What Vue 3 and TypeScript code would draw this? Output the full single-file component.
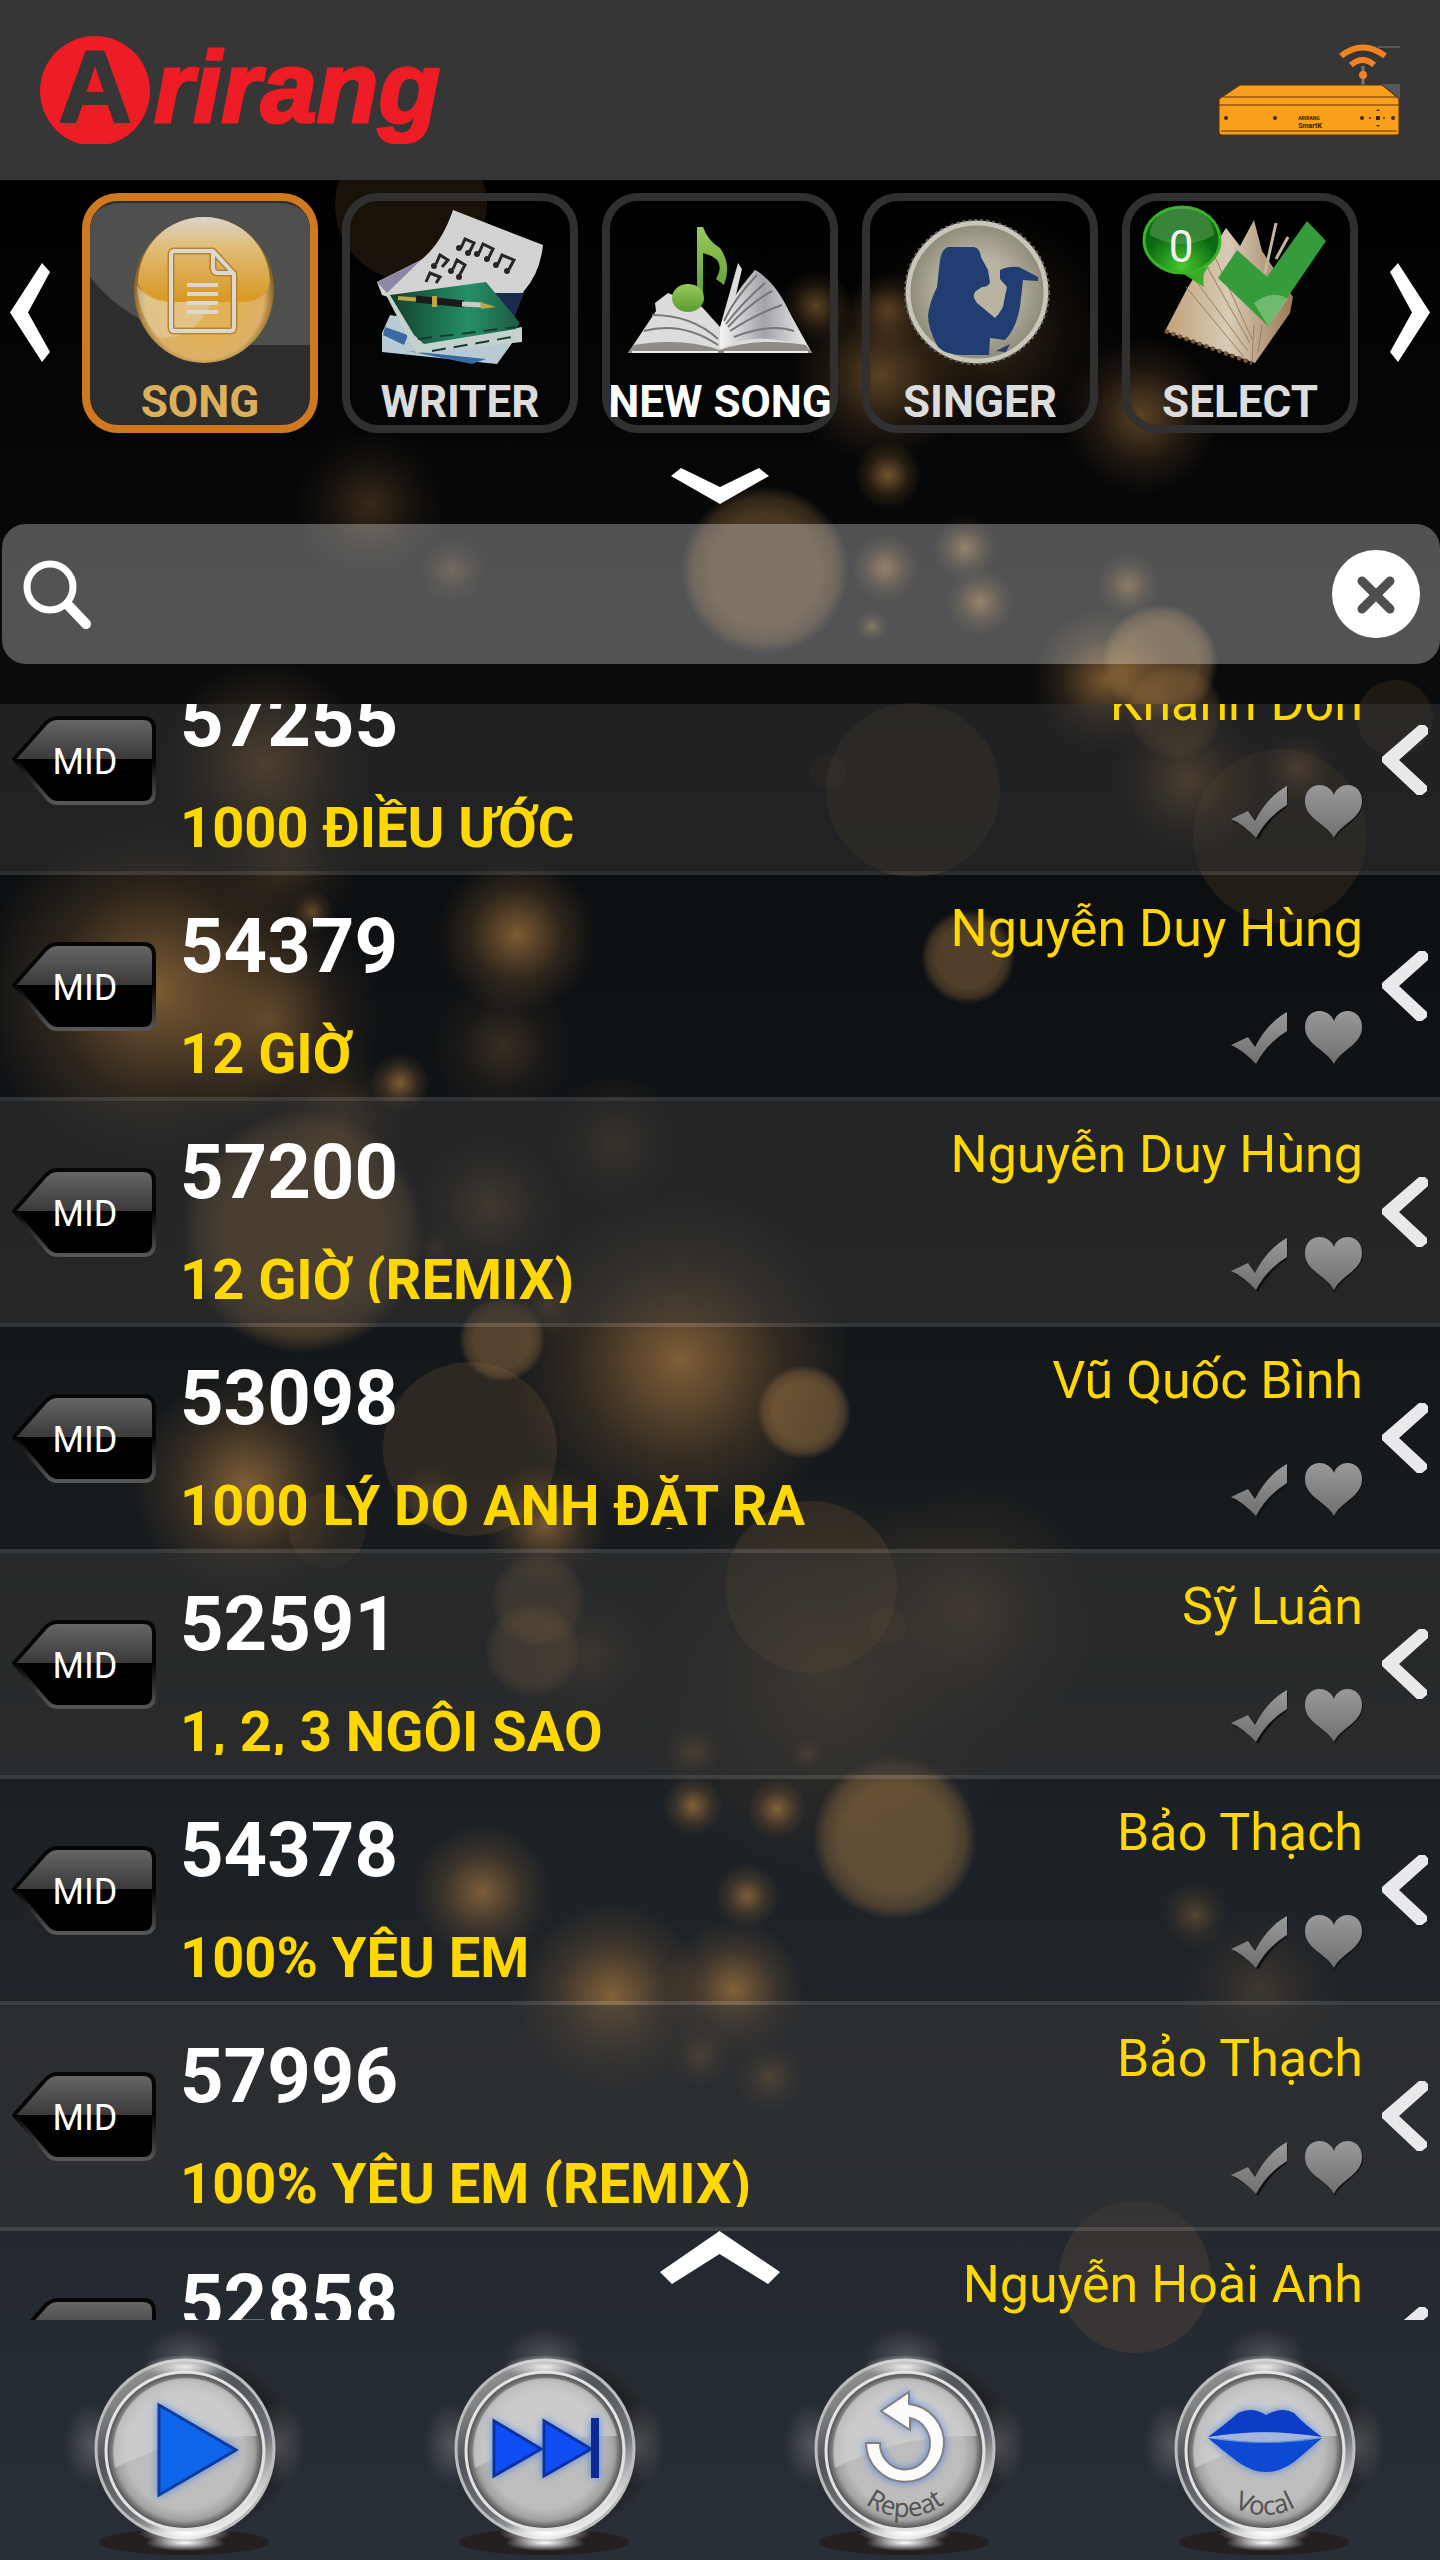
<script setup lang="ts">
import { ref } from 'vue'

interface Song {
  code: string
  title: string
  artist: string
}

interface Light {
  x: number
  y: number
  r: number
  o: number
}

const keyword = ref('')
const activeTab = ref('SONG')
const tabs: string[] = ['SONG', 'WRITER', 'NEW SONG', 'SINGER', 'SELECT']
const controls: string[] = ['Play', 'Next', 'Repeat', 'Vocal']

const songs: Song[] = [
  { code: '57255', title: '1000 ĐIỀU ƯỚC', artist: 'Khánh Đơn' },
  { code: '54379', title: '12 GIỜ', artist: 'Nguyễn Duy Hùng' },
  { code: '57200', title: '12 GIỜ (REMIX)', artist: 'Nguyễn Duy Hùng' },
  { code: '53098', title: '1000 LÝ DO ANH ĐẶT RA', artist: 'Vũ Quốc Bình' },
  { code: '52591', title: '1, 2, 3 NGÔI SAO', artist: 'Sỹ Luân' },
  { code: '54378', title: '100% YÊU EM', artist: 'Bảo Thạch' },
  { code: '57996', title: '100% YÊU EM (REMIX)', artist: 'Bảo Thạch' },
  { code: '52858', title: '', artist: 'Nguyễn Hoài Anh' },
]

const light = (x: number, y: number, r: number, o: number): Light => ({ x, y, r, o })

// Crisp, faint discs of the backdrop
const discs: Light[] = [
  light(411, 205, 76, 0.11), light(1395, 718, 38, 0.1), light(1280, 836, 87, 0.1),
  light(913, 790, 87, 0.1), light(828, 772, 18, 0.06), light(470, 1449, 87, 0.12),
  light(811, 1587, 86, 0.11), light(888, 1626, 18, 0.07), light(327, 1531, 38, 0.08),
  light(1135, 2277, 76, 0.1),
]

// Brighter discs with a soft rim
const pearls: Light[] = [
  light(765, 570, 84, 0.36), light(968, 957, 47, 0.38), light(303, 1231, 122, 0.42),
  light(502, 1339, 43, 0.38), light(804, 1412, 47, 0.42), light(895, 1838, 82, 0.42),
  light(1160, 662, 58, 0.4), light(538, 1600, 48, 0.26), light(533, 1650, 48, 0.28),
  light(1175, 712, 48, 0.24),
]

// Glows fading out from their centre
const glows: Light[] = [
  light(816, 306, 36, 0.7), light(888, 310, 40, 0.6), light(880, 375, 90, 0.7),
  light(1142, 415, 80, 0.7), light(990, 330, 120, 0.4), light(888, 475, 34, 0.9),
  light(370, 505, 76, 0.4), light(452, 570, 34, 0.4), light(885, 568, 34, 0.8),
  light(965, 548, 32, 0.8), light(980, 602, 34, 0.8), light(1128, 585, 32, 0.7),
  light(872, 626, 16, 0.6), light(1105, 680, 72, 0.9), light(1187, 780, 75, 0.7),
  light(1298, 768, 36, 0.6), light(265, 765, 105, 0.75), light(285, 860, 75, 0.4),
  light(155, 990, 175, 0.95), light(270, 1020, 110, 0.6), light(312, 912, 22, 0.7),
  light(517, 935, 78, 0.95), light(503, 1046, 70, 0.35), light(400, 1083, 30, 0.95),
  light(340, 1120, 70, 0.45), light(615, 1143, 68, 0.35), light(490, 1206, 74, 0.5),
  light(435, 1250, 26, 0.3), light(680, 1360, 170, 0.95), light(548, 1305, 34, 0.4),
  light(245, 1485, 112, 0.95), light(545, 1525, 62, 0.85), light(430, 1500, 34, 0.4),
  light(830, 1680, 200, 0.38), light(970, 1610, 130, 0.4), light(590, 1655, 68, 0.35),
  light(693, 1752, 28, 0.6), light(693, 1806, 30, 0.95), light(777, 1809, 30, 0.95),
  light(807, 1754, 16, 0.5), light(747, 1896, 32, 0.9), light(482, 1892, 68, 0.9),
  light(612, 1997, 94, 0.95), light(734, 1990, 70, 0.95), light(700, 2055, 32, 0.6),
  light(770, 2077, 34, 0.7), light(1195, 1915, 34, 0.5), light(1260, 1990, 80, 0.3),
]
</script>

<template>
  <div class="app">
    <svg class="backdrop" viewBox="0 0 1440 2560" preserveAspectRatio="xMidYMin slice" aria-hidden="true">
      <defs>
        <radialGradient id="glow">
          <stop offset="0" stop-color="#b08040" stop-opacity="0.72" />
          <stop offset="0.25" stop-color="#a57540" stop-opacity="0.54" />
          <stop offset="0.6" stop-color="#a07038" stop-opacity="0.22" />
          <stop offset="1" stop-color="#a07038" stop-opacity="0" />
        </radialGradient>
        <radialGradient id="pearl">
          <stop offset="0.66" stop-color="#bd8a4c" />
          <stop offset="0.86" stop-color="#bd8a4c" stop-opacity="0.65" />
          <stop offset="1" stop-color="#bd8a4c" stop-opacity="0" />
        </radialGradient>
      </defs>
      <circle v-for="(d, i) in glows" :key="`g${i}`" :cx="d.x" :cy="d.y" :r="d.r" :opacity="d.o" fill="url(#glow)" />
      <circle v-for="(d, i) in pearls" :key="`p${i}`" :cx="d.x" :cy="d.y" :r="d.r" :opacity="d.o" fill="url(#pearl)" />
      <circle v-for="(d, i) in discs" :key="`d${i}`" :cx="d.x" :cy="d.y" :r="d.r" :opacity="d.o" fill="#e0a050" />
    </svg>

    <header class="header">
      <svg class="logo" viewBox="0 0 400 108" role="img" aria-label="Arirang">
        <ellipse cx="55" cy="55" rx="55" ry="55" fill="#ee1c25" />
        <text class="logo-a" x="55" y="86" text-anchor="middle">A</text>
        <text class="logo-word" x="114" y="86">rirang</text>
      </svg>
      <button class="plain" aria-label="Device">
        <svg class="device" viewBox="0 0 182 92">
          <path d="M160 2h22v2h-22zM164 40h18v15z" fill="#585858" />
          <path d="M145 22v20" stroke="#777" stroke-width="3" />
          <circle cx="145" cy="31" r="4" fill="#f58220" />
          <path d="M123 12q22-17 44 0M133 21q12-10 23 0" fill="none" stroke="#f58220" stroke-width="6" />
          <path d="M1 55 22 41H164L181 55V89Q181 91 178 91H4Q1 91 1 88Z" fill="#f99f1c" stroke="#51330d" />
          <path d="M5 53H178M1 61H181M3 87H179" stroke="#59380c" fill="none" />
          <g fill="#3c2a12">
            <circle cx="8" cy="74" r="2" /><circle cx="57" cy="74" r="2" />
            <circle cx="144" cy="74" r="2" /><circle cx="152" cy="74" r="1" />
            <rect x="158" y="72" width="4" height="4" /><circle cx="166" cy="74" r="1" />
            <circle cx="175" cy="74" r="2" />
            <path d="m158 67 2-2 2 2zM158 81l2 2 2-2z" />
          </g>
          <text x="91" y="76" text-anchor="middle" font-size="5" font-weight="700" fill="#2c1d08">ARIRANG</text>
          <text x="92" y="84" text-anchor="middle" font-size="7" font-weight="700" fill="#2c1d08">SmartK</text>
        </svg>
      </button>
    </header>

    <nav class="nav">
      <button class="plain" aria-label="Previous">
        <svg class="side" viewBox="0 0 40 100"><path d="M32 0 40 9 18 49.500 40 89 32 99 0 49.500Z" fill="#fff" /></svg>
      </button>
      <div class="tabs">
        <button
          v-for="tab in tabs"
          :key="tab"
          class="tab"
          :class="{ active: tab === activeTab, bright: tab === 'NEW SONG' }"
          @click="activeTab = tab"
        >
          <svg class="picture" viewBox="0 0 236 240" aria-hidden="true">
            <template v-if="tab === 'SONG'">
              <defs>
                <linearGradient id="coin" x2="0" y2="1">
                  <stop stop-color="#d9d4cc" /><stop offset="0.35" stop-color="#e0bd77" />
                  <stop offset="0.95" stop-color="#d99a26" />
                </linearGradient>
                <radialGradient id="coinbase" cy="0.55">
                  <stop offset="0.5" stop-color="#e2b257" /><stop offset="0.85" stop-color="#dcb066" />
                  <stop offset="1" stop-color="#8a6528" />
                </radialGradient>
              </defs>
              <path d="M8 40Q8 10 40 10H196Q228 10 228 40V152H170Q60 150 8 84Z" fill="#4f4f4e" />
              <ellipse cx="122" cy="97" rx="70" ry="73" fill="url(#coinbase)" />
              <path d="M56 90A66 66 0 0 1 188 90Q184 109 158 109H90Q64 107 56 90" fill="url(#coin)" />
              <path d="M55 92Q64 109 92 109H130Q110 150 76 144 56 122 55 92" fill="#e3d3b4" opacity="0.5" />
              <g fill="none" stroke="#b5832f" stroke-width="7" stroke-linejoin="round">
                <path d="M92 58H131L152 81V134Q152 138 148 138H92Q89 138 89 134V62Q89 58 92 58ZM131 58V76Q132 80 136 80H152" />
              </g>
              <g fill="none" stroke="#ddd8cf" stroke-width="4" stroke-linejoin="round">
                <path d="M92 58H131L152 81V134Q152 138 148 138H92Q89 138 89 134V62Q89 58 92 58ZM131 58V76Q132 80 136 80H152" />
                <path d="M105 92H136M105 101H136M105 110H136M105 119H136" />
              </g>
            </template>
            <template v-else-if="tab === 'WRITER'">
              <defs>
                <linearGradient id="folder"><stop stop-color="#123e2c" /><stop offset="0.6" stop-color="#259068" /><stop offset="1" stop-color="#1d5a43" /></linearGradient>
              </defs>
              <path d="M35 89 79 67Q100 50 111 17L201 52Q198 80 182 98L160 140 40 102Z" fill="#d4d3d3" />
              <path d="m35 89 44-22-34 33Z" fill="#8d86a5" />
              <g fill="none" stroke="#252525" stroke-width="3">
                <path d="M119 55l4-9 9 4-5 10M137 60l4-9 10 5-5 10M156 71l4-9 12 5-6 11M94 71l4-9 8 5-6 7M111 76l4-9 8 5-6 11M84 89l4-9 10 4-4 6" />
              </g>
              <g fill="#252525">
                <circle cx="117" cy="55" r="3" /><circle cx="126" cy="60" r="3" /><circle cx="135" cy="61" r="3" />
                <circle cx="145" cy="66" r="3" /><circle cx="154" cy="72" r="3" /><circle cx="165" cy="78" r="3" />
                <circle cx="92" cy="73" r="3" /><circle cx="109" cy="78" r="3" /><circle cx="117" cy="84" r="3" />
              </g>
              <path d="M150 100H182L170 130Z" fill="#1a2c4d" />
              <path d="M48 122 40 140V159L155 171 176 142Z" fill="#b8cbd4" />
              <path d="M43 134 66 142 62 152 41 142ZM66 158 144 166 130 171Z" fill="#3a6aa4" />
              <path d="M44 102 50 99 82 151 180 134V149L74 160Z" fill="#c5d1ce" />
              <path d="M48 102 144 89 178 130 174 136 82 151 72 142Z" fill="url(#folder)" />
              <path d="M76 146 174 134M90 158 170 144" stroke="#173b30" stroke-width="2" stroke-dasharray="14 8" />
              <path d="M56 105 92 108" stroke="#c3a445" stroke-width="4" />
              <path d="M74 106 122 111" stroke="#1b1b1b" stroke-width="7" />
              <path d="M120 111 140 112" stroke="#cacaca" stroke-width="5" />
              <path d="m138 109 16 5-15 2ZM90 103h5v11h-5z" fill="#c3a445" />
            </template>
            <template v-else-if="tab === 'NEW SONG'">
              <defs>
                <linearGradient id="pages"><stop stop-color="#f5f4f2" /><stop offset="0.5" stop-color="#a3a3a8" /><stop offset="1" stop-color="#ededed" /></linearGradient>
                <linearGradient id="note" x2="0" y2="1"><stop stop-color="#9ac95b" /><stop offset="1" stop-color="#5b9c31" /></linearGradient>
              </defs>
              <path d="M53 110 66 100 100 114 118 134 136 70 140 76 132 110 153 77Q172 88 190 124L210 160H26L54 118Z" fill="#dcdcdc" />
              <path d="M118 136Q124 110 153 77 176 90 190 126L206 154Q150 136 118 156Z" fill="url(#pages)" />
              <g fill="none" stroke="#77777d" stroke-width="2">
                <path d="M122 128Q132 106 155 82M124 131Q140 110 163 90M126 134Q148 110 170 98M128 138Q156 120 180 112" />
                <path d="M50 122Q90 122 116 146M42 138Q80 128 116 152M132 144Q168 130 192 138" />
              </g>
              <path d="M26 160 32 152Q80 144 118 157 154 144 204 152L210 160Z" fill="#8f8b86" />
              <path d="M30 159H116M122 159H206" stroke="#f0efed" stroke-width="2" />
              <path d="M95 34H101Q106 48 118 55 130 72 122 92L114 86Q124 68 107 62L101 60V108H95Z" fill="url(#note)" />
              <ellipse cx="86" cy="105" rx="16" ry="14" fill="url(#note)" />
            </template>
            <template v-else-if="tab === 'SINGER'">
              <defs>
                <radialGradient id="plate"><stop offset="0.5" stop-color="#b9b4a2" /><stop offset="1" stop-color="#8d8977" /></radialGradient>
              </defs>
              <circle cx="115" cy="99" r="70" fill="url(#plate)" />
              <circle cx="115" cy="99" r="69" fill="none" stroke="#c9c6ba" stroke-width="5" />
              <circle cx="115" cy="99" r="72" fill="none" stroke="#68665e" stroke-width="2" stroke-dasharray="3 3" />
              <path d="M86 54H112Q118 55 119 64L126 77 128 89Q127 94 120 94 115 97 113 99 110 104 115 110L133 125Q142 116 142 108L145 94 138 86V77Q146 73 157 74L176 84V88L161 87 158 114Q154 136 143 147L128 145 127 162H101Q84 162 76 154 66 136 66 122 68 108 75 94L78 67Q80 56 86 54Z" fill="#213d72" />
              <path d="m134 158 14-7-4 8z" fill="#213d72" />
            </template>
            <template v-else>
              <defs>
                <radialGradient id="bubble" cy="0.9"><stop stop-color="#46c92c" /><stop offset="1" stop-color="#0c6b12" /></radialGradient>
                <linearGradient id="cream"><stop stop-color="#c1a277" /><stop offset="0.5" stop-color="#d8cbb6" /><stop offset="1" stop-color="#9a7955" /></linearGradient>
              </defs>
              <path d="M43 138 66 94 104 35 118 53 132 27 140 58 171 104 168 120 133 170Z" fill="url(#cream)" />
              <g fill="none" stroke="#9a7d5c" stroke-width="1">
                <path d="M64 94 122 164M74 88 126 158M84 72 128 150M92 62 130 146M132 132 130 168M140 132 136 160" />
              </g>
              <path d="M43 138 130 170" stroke="#7a5a38" stroke-width="4" stroke-dasharray="4 3" />
              <path d="M143 80 154 30M154 66 166 44" stroke="#c4b7a1" stroke-width="3" />
              <path d="M96 85 115 57 145 84 185 28 204 48 146 133Z" fill="#369c3b" />
              <path d="M132 110Q150 96 166 106L146 133Z" fill="#a5d7a1" opacity="0.5" />
              <path d="M88 74Q79 78 82 94L60 80Z" fill="#39ab27" />
              <ellipse cx="60" cy="47" rx="38" ry="33" fill="url(#bubble)" stroke="#36b52a" stroke-width="3" />
              <path d="M28 42A32 28 0 0 1 92 42Q60 60 28 42" fill="#6fa66a" opacity="0.45" />
              <text x="59" y="69" text-anchor="middle" font-size="44" fill="#f0f0f0">0</text>
            </template>
          </svg>
          <span class="caption">{{ tab }}</span>
        </button>
      </div>
      <button class="plain" aria-label="Next tabs">
        <svg class="side" viewBox="0 0 40 100"><path d="M8 0 0 9 22 49.500 0 89 8 99 40 49.500Z" fill="#fff" /></svg>
      </button>
    </nav>

    <button class="plain expand" aria-label="Show more">
      <svg viewBox="0 0 98 36"><path d="M0 8 10 0 49 19 88 0 98 8 49 36Z" fill="#fff" /></svg>
    </button>

    <form class="search" role="search" @submit.prevent>
      <label for="keyword" aria-label="Search">
        <svg viewBox="0 0 70 70">
          <circle cx="28" cy="28" r="23" fill="none" stroke="#fff" stroke-width="7" />
          <path d="M47 47 64 65" stroke="#fff" stroke-width="10" stroke-linecap="round" />
        </svg>
      </label>
      <input id="keyword" v-model="keyword" type="text" />
      <button class="plain" type="button" aria-label="Clear" @click="keyword = ''">
        <svg viewBox="0 0 88 88">
          <circle cx="44" cy="44" r="44" fill="#fff" />
          <path d="M30 31 58 59M58 31 30 59" stroke="#4e4f50" stroke-width="9" stroke-linecap="round" />
        </svg>
      </button>
    </form>

    <main class="list">
      <svg class="defs" aria-hidden="true">
        <defs>
          <linearGradient id="badge" x2="0" y2="1">
            <stop stop-color="#686868" /><stop offset="0.48" stop-color="#3a3a3a" /><stop offset="0.48" stop-color="#000" />
          </linearGradient>
          <linearGradient id="rim" x2="0" y2="1">
            <stop stop-color="#060606" /><stop offset="0.5" stop-color="#060606" /><stop offset="1" stop-color="#565656" />
          </linearGradient>
          <linearGradient id="steel" x2="0" y2="1"><stop stop-color="#999" /><stop offset="1" stop-color="#6f6f6f" /></linearGradient>
        </defs>
      </svg>
      <ul class="songs">
        <li v-for="song in songs" :key="song.code" class="song">
          <button class="plain mid">
            <svg viewBox="0 0 144 90" aria-hidden="true">
              <path d="M2 43 34 7Q39 2 46 2H131Q142 2 142 13V76Q142 87 131 87H46Q40 87 36 83Z" fill="url(#badge)" stroke="url(#rim)" stroke-width="4" />
            </svg>
            <span>MID</span>
          </button>
          <div class="info">
            <strong class="code">{{ song.code }}</strong>
            <span class="title">{{ song.title }}</span>
          </div>
          <div class="side-info">
            <span class="artist">{{ song.artist }}</span>
            <div class="marks">
              <button class="plain" aria-label="Choose">
                <svg viewBox="0 0 58 56"><path d="M2 36 19 28 26 38Q38 14 57 3L56 22Q38 34 27 55Q14 41 2 36" fill="#101010" /><path d="M0 34 17 26 24 36Q36 12 56 1V20Q36 32 25 53Q12 39 0 34" fill="url(#steel)" /></svg>
              </button>
              <button class="plain" aria-label="Favourite">
                <svg viewBox="0 0 58 56"><path d="M30 55C22 40 1 34 1 18 1-2 24-5 30 12 35-5 58-2 58 18 58 34 37 40 30 55" fill="#151515" /><path d="M29 53C21 38 0 34 0 16 0-3 23-5 29 10 34-5 57-3 57 16 57 34 36 38 29 53" fill="url(#steel)" /></svg>
              </button>
            </div>
          </div>
          <button class="plain more" aria-label="Details">
            <svg viewBox="0 0 46 70"><path d="M46 3V9L17 35 45 61V66L40 70H35L0 37V32L37 0H43Z" fill="#e9e9ec" /></svg>
          </button>
        </li>
      </ul>
      <button class="plain collapse" aria-label="Collapse">
        <svg viewBox="0 0 120 53"><path d="M0 41 59.500 0 120 41 108 53 59.500 23 12 53Z" fill="#fff" /></svg>
      </button>
    </main>

    <footer class="controls">
      <button v-for="name in controls" :key="name" class="plain control" :aria-label="name">
        <svg viewBox="0 0 360 240">
          <defs>
            <linearGradient id="chrome" x1="0.2" x2="0.8" y2="1">
              <stop stop-color="#a0a0a0" /><stop offset="0.35" stop-color="#50545a" />
              <stop offset="0.65" stop-color="#707478" /><stop offset="0.9" stop-color="#e6e6e6" />
            </linearGradient>
            <radialGradient id="face">
              <stop offset="0.75" stop-color="#bdbdbd" /><stop offset="0.9" stop-color="#a2a2a2" /><stop offset="1" stop-color="#565656" />
            </radialGradient>
            <radialGradient id="shine"><stop stop-color="#fff" /><stop offset="1" stop-color="#fff" stop-opacity="0" /></radialGradient>
            <radialGradient id="shade"><stop offset="0.8" stop-color="#1f2023" /><stop offset="1" stop-color="#1f2023" stop-opacity="0" /></radialGradient>
            <filter id="halo" x="-30%" y="-30%" width="160%" height="160%">
              <feDropShadow dx="0" dy="0" stdDeviation="4" flood-color="#2a6de0" flood-opacity="0.7" />
            </filter>
          </defs>
          <circle cx="208" cy="124" r="88" fill="url(#shade)" />
          <g fill="url(#shine)" opacity="0.2">
            <ellipse cx="185" cy="38" rx="42" ry="30" />
            <ellipse cx="92" cy="124" rx="28" ry="42" />
            <ellipse cx="278" cy="124" rx="26" ry="42" />
          </g>
          <ellipse cx="184" cy="222" rx="85" ry="13" fill="#241f20" />
          <circle cx="185" cy="129" r="89" fill="url(#chrome)" stroke="#bcbcbc" stroke-width="3" />
          <ellipse cx="185" cy="47" rx="42" ry="12" fill="url(#shine)" opacity="0.85" />
          <ellipse cx="185" cy="213" rx="46" ry="12" fill="url(#shine)" />
          <ellipse cx="185" cy="223" rx="40" ry="8" fill="url(#shine)" />
          <circle cx="185" cy="131" r="79" fill="none" stroke="#e3e3e3" stroke-width="3" />
          <circle cx="185" cy="131" r="77" fill="url(#face)" />
          <path d="M115 148A72 73 0 1 1 257 116Q180 114 115 148" fill="#d3d3d3" opacity="0.6" />

          <path v-if="name === 'Play'" d="M159 85V175L236 130Z" fill="#0b66ea" stroke="#0a3aa4" stroke-width="3" filter="url(#halo)" />
          <g v-else-if="name === 'Next'" filter="url(#halo)">
            <path d="M134 101V156L181 129ZM184 101V156L231 129Z" fill="#0a50f5" stroke="#0830a0" stroke-width="3" />
            <path d="M235 98V158" stroke="#0a2b94" stroke-width="8" />
          </g>
          <template v-else-if="name === 'Repeat'">
            <g filter="url(#halo)" stroke="#808080">
              <path d="M146 123H160A25 26 0 1 0 190 98V110L161 91 189 72V84A39 39 0 1 1 146 123Z" fill="#fbfbfb" stroke-width="2" />
            </g>
            <path id="repeat-arc" d="M119 131A66 66 0 0 0 251 131" fill="none" />
            <text class="ring-label"><textPath href="#repeat-arc" startOffset="50%" text-anchor="middle">Repeat</textPath></text>
          </template>
          <template v-else>
            <g filter="url(#halo)">
              <path d="M128 117Q148 102 158 93 172 86 186 95 202 86 214 93 224 104 242 117 206 112 186 112 160 112 128 117" fill="#0a3ec4" />
              <path d="M128 118Q156 123 186 123 216 123 242 118 226 132 214 142 186 162 158 142 142 130 128 118" fill="#0a48d2" />
              <path d="M132 117Q186 108 238 117 186 126 132 117" fill="#a5b6dc" />
            </g>
            <path id="vocal-arc" d="M121 131A64 64 0 0 0 249 131" fill="none" />
            <text class="ring-label"><textPath href="#vocal-arc" startOffset="50%" text-anchor="middle">Vocal</textPath></text>
          </template>
        </svg>
      </button>
    </footer>
  </div>
</template>

<style>
body {
  margin: 0;
  background: #000;
}
</style>

<style scoped>
.app {
  position: relative;
  display: flex;
  flex-direction: column;
  height: 100vh;
  overflow: hidden;
  font-family: Roboto, "Noto Sans", sans-serif;
  color: #fff;
  background: linear-gradient(#000 180px, #0b0d0f 30%, #171b1e 60%, #292f37);
}

.app svg {
  display: block;
}

.app .backdrop {
  position: absolute;
  inset: 0;
  width: 100%;
  height: 100%;
}

.header,
.nav,
.expand,
.search,
.list,
.controls {
  position: relative;
  flex: none;
}

.plain {
  display: block;
  padding: 0;
  border: 0;
  background: none;
  color: inherit;
  font: inherit;
  cursor: pointer;
}

.header {
  display: flex;
  align-items: center;
  justify-content: space-between;
  height: 180px;
  padding: 0 40px;
  box-sizing: border-box;
  background: #363636;
}

.logo {
  width: 400px;
  height: 108px;
}

.logo text {
  font-family: "Liberation Sans", Arial, sans-serif;
  font-weight: 700;
}

.logo-a {
  font-size: 102px;
  fill: #363636;
  stroke: #363636;
  stroke-width: 2px;
}

.logo-word {
  font-size: 101px;
  font-style: italic;
  fill: #ee1c25;
  stroke: #ee1c25;
  stroke-width: 3px;
}

.device {
  width: 182px;
  height: 92px;
}

.nav {
  display: flex;
  align-items: center;
  gap: 32px;
  padding: 13px 10px 0;
}

.side {
  width: 40px;
  height: 100px;
}

.tabs {
  flex: 1;
  display: grid;
  grid-template-columns: repeat(5, minmax(0, 1fr));
  gap: 24px;
}

.tab {
  position: relative;
  height: 240px;
  padding: 0;
  border: 8px solid #303031;
  border-radius: 36px;
  background: none;
  color: #dcdcdc;
  font: inherit;
  cursor: pointer;
  display: flex;
  align-items: flex-end;
  justify-content: center;
}

.tab.active {
  border-color: #cf7820;
  background: #2d2d2d;
  color: #dcb05a;
}

.tab.bright {
  color: #fff;
}

.picture {
  position: absolute;
  inset: -8px;
  width: calc(100% + 16px);
  height: 240px;
}

.active .picture {
  clip-path: inset(8px round 28px);
}

.caption {
  position: relative;
  white-space: nowrap;
  font-size: 44px;
  line-height: 46px;
  font-weight: 700;
}

.expand {
  align-self: center;
  width: 98px;
  margin: 35px 0 20px;
}

.search {
  display: flex;
  align-items: center;
  gap: 24px;
  height: 140px;
  margin-left: 2px;
  padding: 0 20px;
  box-sizing: border-box;
  border-radius: 24px;
  background: rgba(255, 255, 255, 0.3);
}

.search label {
  width: 70px;
}

.search input {
  flex: 1;
  min-width: 0;
  height: 100px;
  border: 0;
  outline: 0;
  background: none;
  color: #fff;
  font: inherit;
  font-size: 52px;
}

.search .plain {
  width: 88px;
}

.list {
  flex: 1;
  min-height: 0;
  margin-top: 40px;
  overflow: hidden;
}

.app .defs {
  position: absolute;
  width: 0;
  height: 0;
}

.songs {
  margin: -55px 0 0;
  padding: 0;
  list-style: none;
}

.song {
  display: flex;
  align-items: flex-start;
  height: 222px;
  padding: 0 12px;
  border-bottom: 4px solid rgba(255, 255, 255, 0.13);
  background-clip: padding-box;
}

.song:nth-child(odd) {
  background-color: rgba(54, 54, 54, 0.5);
}

.mid {
  display: grid;
  flex: none;
  width: 144px;
  margin-top: 67px;
  place-items: center;
}

.mid svg,
.mid span {
  grid-area: 1 / 1;
}

.mid span {
  padding: 2px 0 0 2px;
  font-size: 36px;
  line-height: 42px;
}

.info {
  flex: none;
  padding: 27px 0 0 24px;
}

.code,
.title {
  display: block;
  white-space: nowrap;
  font-weight: 700;
}

.code {
  font-size: 76px;
  line-height: 88px;
}

.title {
  height: 46px;
  margin-top: 23px;
  padding-top: 18px;
  overflow: hidden;
  font-size: 56px;
  line-height: 46px;
  color: #ffd800;
}

.side-info {
  flex: 1;
  display: flex;
  flex-direction: column;
  align-items: flex-end;
  padding-top: 22px;
}

.artist {
  white-space: nowrap;
  font-size: 52px;
  line-height: 64px;
  color: #ffd800;
}

.marks {
  display: flex;
  gap: 16px;
  margin-top: 50px;
}

.marks svg {
  width: 58px;
  height: 56px;
}

.more {
  flex: none;
  width: 46px;
  margin: 76px 0 0 19px;
}

.collapse {
  position: absolute;
  bottom: 36px;
  left: 50%;
  width: 120px;
  transform: translateX(-50%);
}

.controls {
  display: grid;
  grid-template-columns: repeat(4, 1fr);
  height: 240px;
}

.control svg {
  width: 100%;
  height: 240px;
}

.ring-label {
  font-family: "Noto Sans", sans-serif;
  font-size: 26px;
  fill: #555;
}
</style>
